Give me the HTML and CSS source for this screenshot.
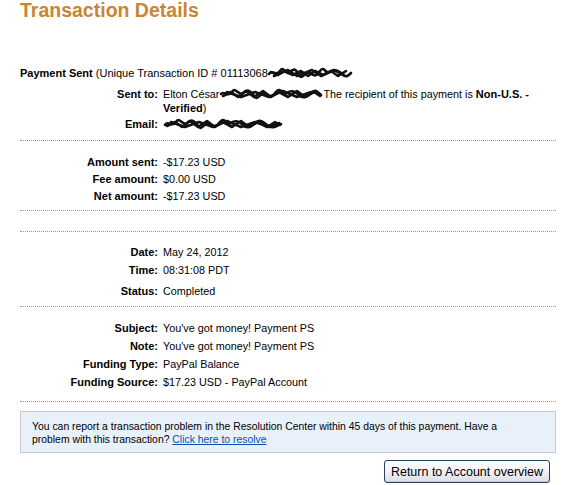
FILE: index.html
```html
<!DOCTYPE html>
<html>
<head>
<meta charset="utf-8">
<link rel="stylesheet" href="styles.css">
</head>
<body>
<div class="page">
  <h1 class="title">Transaction Details</h1>

  <div class="summary"><b>Payment Sent</b> (Unique Transaction ID # 01113068<svg class="scribble" width="84" height="12" viewBox="0 0 84 12"><path d="M1 7 C4 2 8 10 12 4 S18 9 22 5 S28 2 31 8 S38 3 42 6 S48 10 52 4 S58 8 62 5 S70 3 74 7 S80 9 83 6" /><path d="M3 5 L10 8 L16 4 L25 8 L33 4 L40 9 L47 4 L55 8 L63 4 L70 9 L78 4" /><path d="M6 9 L20 3 L29 9 L44 3 L53 9 L66 3 L76 8" /></svg></div>

  <div class="grid sent">
    <div class="label">Sent to:</div>
    <div class="value">Elton César<svg class="scribble" width="104" height="12" viewBox="0 0 104 12"><path d="M2 6 C5 2 9 10 13 4 S20 9 24 5 S31 2 35 8 S42 3 46 6 S53 10 57 4 S64 8 68 5 S76 3 80 7 S88 9 92 5 S98 3 102 7" /><path d="M4 8 L12 4 L19 9 L27 3 L35 9 L44 3 L52 9 L60 4 L69 9 L78 3 L86 9 L95 4 L101 8" /><path d="M8 4 L22 9 L36 4 L50 9 L64 3 L78 9 L92 4" /></svg>The recipient of this payment is <b>Non-U.S. - Verified</b>)</div>
    <div class="label">Email:</div>
    <div class="value"><svg class="scribble" width="120" height="12" viewBox="0 0 120 12"><path d="M2 7 C5 2 9 10 13 4 S20 9 24 5 S31 2 35 8 S42 3 46 6 S53 10 57 4 S64 8 68 5 S76 3 80 7 S88 9 92 5 S99 3 104 7 S112 9 118 6" /><path d="M4 8 L12 4 L19 9 L27 3 L35 9 L44 3 L52 9 L60 4 L69 9 L78 3 L86 9 L95 4 L104 9 L112 4 L117 7" /><path d="M8 4 L22 9 L36 4 L50 9 L64 3 L78 9 L92 4 L106 9 L116 5" /></svg></div>
  </div>

  <hr class="divider first">

  <div class="grid amounts">
    <div class="label">Amount sent:</div>
    <div class="value">-$17.23 USD</div>
    <div class="label">Fee amount:</div>
    <div class="value">$0.00 USD</div>
    <div class="label">Net amount:</div>
    <div class="value">-$17.23 USD</div>
  </div>

  <hr class="divider second">
  <div class="spacer"></div>
  <hr class="divider">

  <div class="grid dates">
    <div class="label">Date:</div>
    <div class="value">May 24, 2012</div>
    <div class="label r2">Time:</div>
    <div class="value r2">08:31:08 PDT</div>
    <div class="label r3">Status:</div>
    <div class="value r3">Completed</div>
  </div>

  <hr class="divider third">

  <div class="grid info">
    <div class="label">Subject:</div>
    <div class="value">You've got money! Payment PS</div>
    <div class="label">Note:</div>
    <div class="value">You've got money! Payment PS</div>
    <div class="label">Funding Type:</div>
    <div class="value">PayPal Balance</div>
    <div class="label">Funding Source:</div>
    <div class="value">$17.23 USD - PayPal Account</div>
  </div>

  <hr class="divider fourth">

  <div class="notice">You can report a transaction problem in the Resolution Center within 45 days of this payment. Have a problem with this transaction? <a href="#">Click here to resolve</a></div>

  <div class="actions">
    <button class="btn" type="button">Return to Account overview</button>
  </div>
</div>
</body>
</html>
```

FILE: styles.css
```css
html, body {
  margin: 0;
  padding: 0;
  background: #ffffff;
}

body {
  font-family: "Liberation Sans", Arial, sans-serif;
  font-size: 11px;
  color: #000000;
}

.page {
  width: 536px;
  padding: 0 11px 0 20px;
}

.title {
  margin: 0;
  font-size: 19.5px;
  line-height: 20px;
  font-weight: bold;
  color: #c98534;
}

.summary {
  margin-top: 46px;
  line-height: 14px;
  white-space: nowrap;
}

.scribble {
  vertical-align: -2px;
  overflow: visible;
}

.scribble path {
  fill: none;
  stroke: #111111;
  stroke-width: 2.6;
  stroke-linejoin: round;
  stroke-linecap: round;
}

.grid {
  display: grid;
  grid-template-columns: 138px 1fr;
  column-gap: 5px;
  line-height: 14px;
}

.value {
  font-size: 10.8px;
}

.label {
  text-align: right;
  font-weight: bold;
  white-space: nowrap;
}

.sent {
  margin-top: 7px;
  row-gap: 2px;
}

.sent .value b {
  font-size: 11px;
}

.divider {
  margin: 0;
  border: 0;
  border-top: 1px dotted #9a9a9a;
  height: 0;
}

.divider.first {
  margin-top: 9px;
}

.amounts {
  margin-top: 14px;
  row-gap: 3px;
}

.divider.second {
  margin-top: 7px;
}

.spacer {
  height: 20px;
}

.dates {
  margin-top: 13px;
}

.dates .r2 {
  margin-top: 4px;
}

.dates .r3 {
  margin-top: 7px;
}

.divider.third {
  margin-top: 8px;
}

.info {
  margin-top: 14px;
  row-gap: 4px;
}

.divider.fourth {
  margin-top: 12px;
}

.notice {
  margin-top: 9px;
  background: #e8f0f9;
  border: 1px solid #c8c8c8;
  padding: 8px 50px 6px 11px;
  font-size: 10.4px;
  line-height: 13px;
}

.notice a {
  color: #0b4fb5;
  text-decoration: underline;
}

.actions {
  display: flex;
  justify-content: flex-end;
  padding-right: 6px;
  margin-top: 7px;
}

.btn {
  width: 166px;
  height: 23px;
  padding: 0;
  font-family: "Liberation Sans", Arial, sans-serif;
  font-size: 12.5px;
  color: #000000;
  border: 1px solid #27415f;
  border-radius: 3px;
  background: linear-gradient(#ffffff 0%, #f4f4f8 45%, #dcdde6 100%);
  box-shadow: inset 0 -1px 0 #c9cad6;
}
```
